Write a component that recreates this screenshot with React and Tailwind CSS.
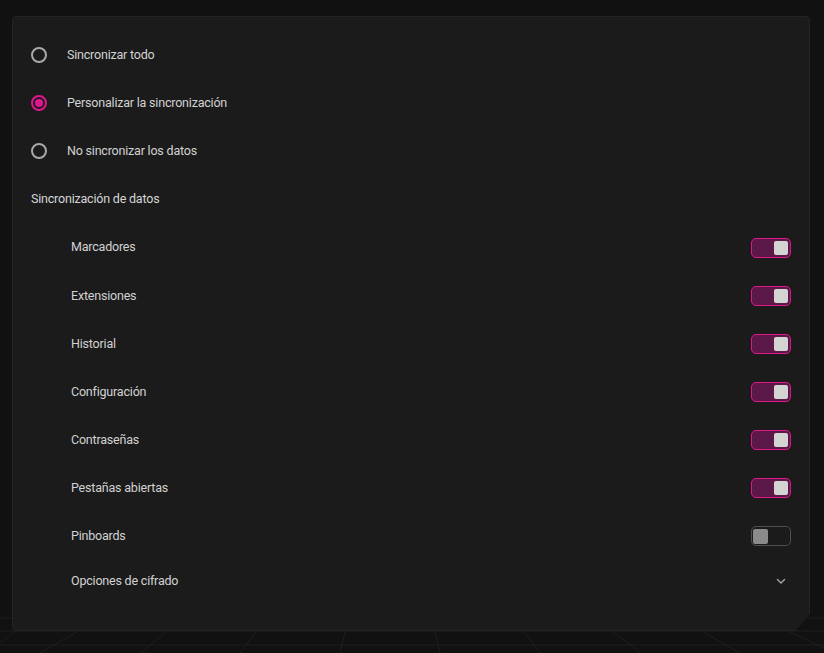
import React, { useState } from 'react';

const radios = ['Sincronizar todo', 'Personalizar la sincronización', 'No sincronizar los datos'];

const items = [
  { label: 'Marcadores', on: true },
  { label: 'Extensiones', on: true },
  { label: 'Historial', on: true },
  { label: 'Configuración', on: true },
  { label: 'Contraseñas', on: true },
  { label: 'Pestañas abiertas', on: true },
  { label: 'Pinboards', on: false },
];

const Toggle = ({ on, onClick }) => (
  <button
    onClick={onClick}
    className={
      on
        ? 'w-10 h-5 rounded-[5px] border-[1.5px] border-[#e0168f] bg-[#5a1946] flex items-center justify-end px-[2px]'
        : 'w-10 h-5 rounded-[5px] border-[1.5px] border-[#4e4e4e] bg-[#1b1b1b] flex items-center justify-start px-[1px]'
    }
  >
    <span className={on ? 'w-[14px] h-[14px] rounded-[2px] bg-[#d4d4d4]' : 'w-[15px] h-[15px] rounded-[2px] bg-[#8a8a8a]'}></span>
  </button>
);

const App = () => {
  const [mode, setMode] = useState(1);
  const [state, setState] = useState(items.map((i) => i.on));

  return (
    <div
      className="relative w-[824px] h-[653px] bg-[#111111] overflow-hidden pt-4 pl-3 pr-[14px]"
      style={{ fontFamily: 'Roboto, "Liberation Sans", sans-serif' }}
    >
      {/* Background grid */}
      <svg className="absolute left-0 bottom-0" width="824" height="80" viewBox="0 0 824 80">
        <g stroke="#1f1f1f" strokeWidth="1">
          <line x1="0" y1="58" x2="824" y2="58" />
          <line x1="0" y1="72" x2="824" y2="72" />
          <line x1="0" y1="45" x2="824" y2="45" />
          <line x1="40" y1="40" x2="0" y2="70" />
          <line x1="110" y1="40" x2="40" y2="80" />
          <line x1="190" y1="40" x2="140" y2="80" />
          <line x1="270" y1="40" x2="240" y2="80" />
          <line x1="350" y1="40" x2="340" y2="80" />
          <line x1="430" y1="40" x2="440" y2="80" />
          <line x1="510" y1="40" x2="540" y2="80" />
          <line x1="590" y1="40" x2="640" y2="80" />
          <line x1="670" y1="40" x2="740" y2="80" />
          <line x1="750" y1="40" x2="824" y2="75" />
        </g>
      </svg>

      <div
        className="relative w-[798px] h-[615px] bg-[#1b1b1b] rounded-[4px] border border-[#242424] pt-[14px] pl-[18px] pr-[18px]"
        style={{ clipPath: 'polygon(0 0, 100% 0, 100% calc(100% - 17px), calc(100% - 14px) 100%, 0 100%)' }}
      >
        {radios.map((r, i) => (
          <div key={r} className="h-12 flex items-center gap-5 cursor-pointer" onClick={() => setMode(i)}>
            <span
              className={
                mode === i
                  ? 'w-4 h-4 rounded-full border-2 border-[#e0168f] flex items-center justify-center'
                  : 'w-4 h-4 rounded-full border-2 border-[#a8a8a8]'
              }
            >
              {mode === i && <span className="w-2 h-2 rounded-full bg-[#e0168f]"></span>}
            </span>
            <span className="text-[12.5px] tracking-[-0.2px] text-[#d2d2d2]">{r}</span>
          </div>
        ))}

        <div className="h-12 flex items-center text-[12.5px] tracking-[-0.2px] text-[#d6d6d6]">
          Sincronización de datos
        </div>

        {items.map((it, i) => (
          <div
            key={it.label}
            className={
              i === 0
                ? 'h-[49px] flex items-center justify-between pl-10 pr-0'
                : 'h-12 flex items-center justify-between pl-10 pr-0'
            }
          >
            <span className="text-[12.5px] tracking-[-0.2px] text-[#d2d2d2]">{it.label}</span>
            <Toggle on={state[i]} onClick={() => setState(state.map((v, j) => (j === i ? !v : v)))} />
          </div>
        ))}

        <div className="h-[42px] flex items-center justify-between pl-10 pr-[4px]">
          <span className="text-[12.5px] tracking-[-0.2px] text-[#d2d2d2]">Opciones de cifrado</span>
          <svg width="12" height="12" viewBox="0 0 12 12" fill="none" stroke="#a0a0a0" strokeWidth="1.5" strokeLinecap="round" strokeLinejoin="round">
            <path d="M2.5 4.5 6 8 9.5 4.5" />
          </svg>
        </div>
      </div>
    </div>
  );
};

export default App;
